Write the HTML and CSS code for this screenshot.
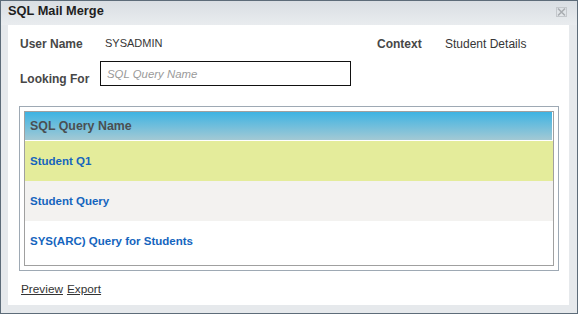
FILE: index.html
```html
<!DOCTYPE html>
<html lang="en">
<head>
    <meta charset="UTF-8">
    <title>SQL Mail Merge</title>
    <link rel="stylesheet" href="styles.css">
</head>
<body>
<div class="window">
    <div class="title-bar">
        <span class="title">SQL Mail Merge</span>
        <svg class="close" width="11" height="10" viewBox="0 0 11 10">
            <rect x="0.5" y="0.5" width="10" height="9" fill="none" stroke="#c4c8cc"/>
            <path d="M2 1.5 L9 8.5 M9 1.5 L2 8.5" stroke="#a9adb1" stroke-width="1.6"/>
        </svg>
    </div>
    <div class="panel">
        <div class="info-row">
            <div class="info-left">
                <span class="label user-label">User Name</span>
                <span class="value sysadmin">SYSADMIN</span>
            </div>
            <span class="label context-label">Context</span>
            <span class="value">Student Details</span>
        </div>
        <div class="search-row">
            <span class="label look-label">Looking For</span>
            <input class="search" type="text" placeholder="SQL Query Name">
        </div>
        <div class="group">
            <div class="grid">
                <div class="grid-head">SQL Query Name</div>
                <div class="grid-row selected"><a href="#">Student Q1</a></div>
                <div class="grid-row alt"><a href="#">Student Query</a></div>
                <div class="grid-row"><a href="#">SYS(ARC) Query for Students</a></div>
            </div>
        </div>
        <div class="actions">
            <a href="#">Preview</a>
            <a href="#">Export</a>
        </div>
    </div>
</div>
</body>
</html>
```

FILE: styles.css
```css
*{margin: 0;padding: 0;box-sizing: border-box;}
body{background: #fff;font-family: "Liberation Sans", Arial, sans-serif;}
.window{width: 578px;height: 314px;border: 1px solid #5d6c79;background: #e6e9ec;}
.title-bar{height: 24px;display: flex;justify-content: space-between;padding: 0 10px 0 7px;
    background: linear-gradient(#d9dee3, #e9ecef);}
.title{font-size: 12.8px;font-weight: bold;color: #1e1e1e;line-height: 20px;}
.close{margin-top: 6px;}
.panel{height: 280px;margin: 0 8px 0 7px;background: #fff;padding-top: 9px;}

.label{font-size: 12px;font-weight: bold;color: #474747;}
.value{font-size: 12px;color: #363636;}
.info-row{height: 20px;display: flex;align-items: center;padding-left: 12px;}
.info-left{width: 357px;display: flex;}
.user-label{width: 85px;}
.sysadmin{font-size: 11px;}
.context-label{width: 68px;}

.search-row{display: flex;align-items: flex-end;margin-top: 7px;padding-left: 12px;}
.look-label{width: 80px;line-height: 14px;}
.search{width: 251px;height: 25px;border: 1px solid #111;padding-left: 6px;outline: none;
    font-family: "Liberation Sans", Arial, sans-serif;font-size: 11.4px;}
.search::placeholder{color: #9a9a9a;font-style: italic;}

.group{margin: 20px 10px 0 11px;height: 165px;border: 1px solid #9ea9b4;padding: 4px;}
.grid{height: 155px;border: 1px solid #a0a0a0;background: #fff;}
.grid-head{height: 28px;line-height: 29px;padding-left: 5px;border-right: 1px solid #fff;
    font-size: 12.4px;font-weight: bold;color: #4a4f52;
    background: linear-gradient(#3db3e3, #a3c9d4);}
.grid-row{height: 40px;display: flex;align-items: center;padding-left: 5px;}
.selected{margin-top: 1px;background: #e4ec9b;}
.alt{background: #f3f2f0;}
.grid-row a{font-size: 11.5px;font-weight: bold;color: #1565be;text-decoration: none;}

.actions{display: flex;gap: 4px;margin: 11px 0 0 13px;}
.actions a{font-size: 11.8px;color: #333;line-height: 14px;}
```
